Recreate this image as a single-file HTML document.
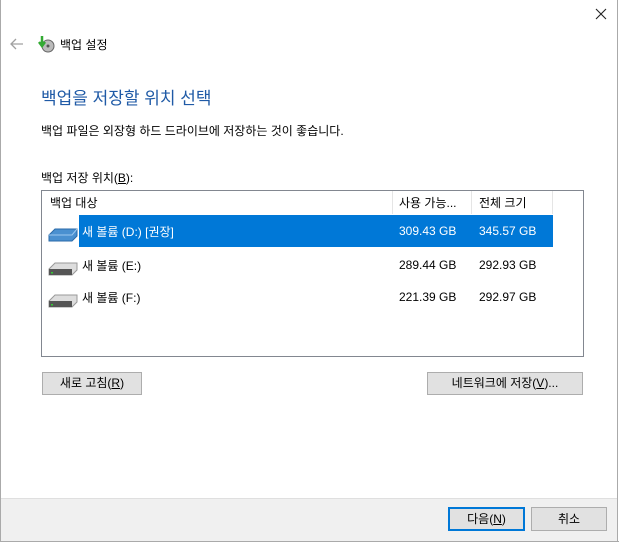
<!DOCTYPE html>
<html><head><meta charset="utf-8"><style>
body{margin:0;width:619px;height:542px;background:#fff;font-family:"Liberation Sans","Noto Sans CJK KR",sans-serif;font-size:12px;color:#000;position:relative;overflow:hidden}
.a{position:absolute;white-space:nowrap}
.btn{position:absolute;background:#e1e1e1;border:1px solid #adadad;box-sizing:border-box;text-align:center;line-height:20px;font-size:12px}
</style></head><body>
<div class="a" style="left:0;top:0;width:1px;height:542px;background:#aaa"></div>
<div class="a" style="right:1px;top:0;width:1px;height:542px;background:#aaa"></div>
<svg class="a" style="left:595px;top:8px" width="12" height="12"><path d="M1 1L11 11M11 1L1 11" stroke="#222" stroke-width="1.1"/></svg>
<svg class="a" style="left:10px;top:38px" width="14" height="12"><path d="M13 6H2M6 1L1 6l5 5" stroke="#a0a0a0" stroke-width="1.3" fill="none"/></svg>
<svg class="a" style="left:37px;top:35px" width="18" height="18"><circle cx="11" cy="11" r="6" fill="#bbb" stroke="#666"/><circle cx="11" cy="11" r="1.5" fill="#555"/><path d="M5 1v9M2 7l3 4 3-4" stroke="#3a3" stroke-width="2.5" fill="none"/></svg>
<div class="a" style="left:60px;top:36px">백업 설정</div>
<div class="a" style="left:41px;top:84px;font-size:17px;color:#1f5aa6">백업을 저장할 위치 선택</div>
<div class="a" style="left:41px;top:122px">백업 파일은 외장형 하드 드라이브에 저장하는 것이 좋습니다.</div>
<div class="a" style="left:41px;top:169px">백업 저장 위치(<u>B</u>):</div>
<div class="a" style="left:41px;top:190px;width:543px;height:167px;border:1px solid #828790;box-sizing:border-box"></div>
<div class="a" style="left:50px;top:194px">백업 대상</div>
<div class="a" style="left:392px;top:191px;width:1px;height:23px;background:#e5e5e5"></div>
<div class="a" style="left:399px;top:194px">사용 가능...</div>
<div class="a" style="left:471px;top:191px;width:1px;height:23px;background:#e5e5e5"></div>
<div class="a" style="left:479px;top:194px">전체 크기</div>
<div class="a" style="left:552px;top:191px;width:1px;height:23px;background:#e5e5e5"></div>
<div class="a" style="left:79px;top:215px;width:474px;height:32px;background:#0078d7"></div>
<svg class="a" style="left:48px;top:227px" width="30" height="16"><path d="M1 8l6-6h22v7l-5 5H1z" fill="#4a90d0" stroke="#2a6aa8"/><path d="M1 8h23l5-6" stroke="#9cc8f0" fill="none"/></svg>
<svg class="a" style="left:48px;top:261px" width="30" height="16"><path d="M1 8l6-6h22v7l-5 5H1z" fill="#ddd" stroke="#999"/><path d="M1 8h23v6H1z" fill="#555"/><rect x="3" y="11" width="2" height="1.5" fill="#3c3"/></svg>
<svg class="a" style="left:48px;top:293px" width="30" height="16"><path d="M1 8l6-6h22v7l-5 5H1z" fill="#ddd" stroke="#999"/><path d="M1 8h23v6H1z" fill="#555"/><rect x="3" y="11" width="2" height="1.5" fill="#3c3"/></svg>
<div class="a" style="left:82px;top:223px;color:#fff">새 볼륨 (D:) [권장]</div>
<div class="a" style="left:399px;top:224px;color:#fff">309.43 GB</div>
<div class="a" style="left:479px;top:224px;color:#fff">345.57 GB</div>
<div class="a" style="left:82px;top:257px">새 볼륨 (E:)</div>
<div class="a" style="left:399px;top:258px">289.44 GB</div>
<div class="a" style="left:479px;top:258px">292.93 GB</div>
<div class="a" style="left:82px;top:289px">새 볼륨 (F:)</div>
<div class="a" style="left:399px;top:290px">221.39 GB</div>
<div class="a" style="left:479px;top:290px">292.97 GB</div>
<div class="btn" style="left:42px;top:372px;width:100px;height:23px">새로 고침(<u>R</u>)</div>
<div class="btn" style="left:427px;top:372px;width:156px;height:23px">네트워크에 저장(<u>V</u>)...</div>
<div class="a" style="left:1px;top:498px;width:616px;height:43px;background:#f0f0f0;border-top:1px solid #dfdfdf"></div>
<div class="a" style="left:0;top:541px;width:619px;height:1px;background:#aaa"></div>
<div class="btn" style="left:448px;top:507px;width:77px;height:24px;border:2px solid #0078d7;line-height:20px">다음(<u>N</u>)</div>
<div class="btn" style="left:531px;top:507px;width:76px;height:24px;line-height:22px">취소</div>
</body></html>
